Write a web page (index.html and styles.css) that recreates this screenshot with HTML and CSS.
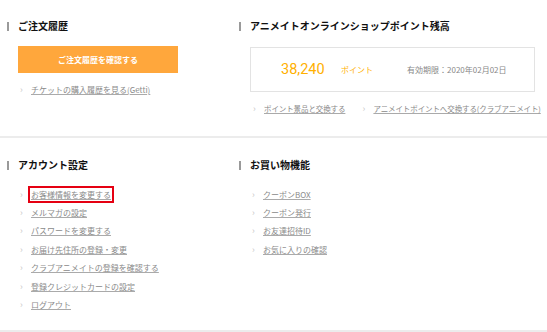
FILE: index.html
```html
<!DOCTYPE html>
<html lang="ja">
<head>
<meta charset="utf-8">
<title>マイページ</title>
<link rel="stylesheet" href="styles.css">
</head>
<body>
<div class="page">
  <section class="section top">
    <div class="col">
      <h2 class="heading">ご注文履歴</h2>
      <a class="btn" href="#">ご注文履歴を確認する</a>
      <ul class="links single">
        <li><a href="#">チケットの購入履歴を見る(Getti)</a></li>
      </ul>
    </div>
    <div class="col">
      <h2 class="heading">アニメイトオンラインショップポイント残高</h2>
      <div class="points">
        <span class="num">38,240</span>
        <span class="unit">ポイント</span>
        <span class="expire">有効期限：2020年02月02日</span>
      </div>
      <ul class="links inline">
        <li><a href="#">ポイント景品と交換する</a></li>
        <li><a href="#">アニメイトポイントへ交換する(クラブアニメイト)</a></li>
      </ul>
    </div>
  </section>
  <section class="section bottom">
    <div class="col">
      <h2 class="heading">アカウント設定</h2>
      <ul class="links list">
        <li><a href="#" class="marked">お客様情報を変更する</a></li>
        <li><a href="#">メルマガの設定</a></li>
        <li><a href="#">パスワードを変更する</a></li>
        <li><a href="#">お届け先住所の登録・変更</a></li>
        <li><a href="#">クラブアニメイトの登録を確認する</a></li>
        <li><a href="#">登録クレジットカードの設定</a></li>
        <li><a href="#">ログアウト</a></li>
      </ul>
    </div>
    <div class="col">
      <h2 class="heading">お買い物機能</h2>
      <ul class="links list">
        <li><a href="#">クーポンBOX</a></li>
        <li><a href="#">クーポン発行</a></li>
        <li><a href="#">お友達招待ID</a></li>
        <li><a href="#">お気に入りの確認</a></li>
      </ul>
    </div>
  </section>
</div>
</body>
</html>
```
FILE: styles.css
```css
* { box-sizing: border-box; }
html, body { margin: 0; padding: 0; background: #fff; }
body {
  font-family: "Noto Sans CJK JP", "Noto Sans", sans-serif;
  color: #222;
  width: 547px;
  height: 332px;
  overflow: hidden;
}
.section {
  display: grid;
  grid-template-columns: 232px minmax(0, 1fr);
  padding-left: 7px;
  padding-right: 12px;
  border-bottom: 2px solid #ececec;
}
.section.top { padding-top: 19px; height: 138px; }
.section.bottom { padding-top: 20px; height: 194px; }
.heading {
  margin: 0;
  display: flex;
  align-items: center;
  gap: 9px;
  font-size: 10px;
  line-height: 14px;
  font-weight: bold;
  color: #111;
}
.heading::before {
  content: "";
  width: 2px;
  height: 9px;
  background: #9a9a9a;
}
.btn {
  display: flex;
  align-items: center;
  justify-content: center;
  margin: 13px 0 0 11px;
  width: 160px;
  height: 27px;
  background: #ffa73c;
  color: #fff;
  font-size: 8px;
  font-weight: bold;
  text-decoration: none;
}
.points {
  margin: 14px 0 0 11px;
  height: 45px;
  border: 1px solid #e3e3e3;
  display: flex;
  align-items: center;
  padding-left: 30px;
}
.num {
  font-family: Roboto, "Noto Sans", sans-serif;
  font-size: 14.5px;
  color: #ffb000;
  width: 60px;
}
.unit {
  font-size: 8px;
  color: #ffb000;
  width: 66px;
}
.expire {
  font-size: 8px;
  color: #888;
}
.links {
  list-style: none;
  margin: 0;
  padding: 0 0 0 13px;
  font-size: 8px;
}
.links li {
  display: flex;
  align-items: center;
  gap: 5px;
}
.links li::before {
  content: "›";
  color: #c8c8c8;
  font-size: 9px;
  width: 6px;
}
.links a {
  color: #8a8a8a;
  text-decoration: underline;
  text-decoration-color: #aaa;
}
.links.single { margin-top: 10px; line-height: 14px; }
.links.inline {
  margin-top: 10px;
  display: flex;
  gap: 17px;
  padding-left: 14px;
  line-height: 14px;
  white-space: nowrap;
  font-size: 7.5px;
  letter-spacing: -0.1px;
}
.links.list { margin-top: 13px; }
.links.list li { height: 18.4px; }
.marked {
  outline: 2px solid #e50012;
  outline-offset: 1px;
}
```
